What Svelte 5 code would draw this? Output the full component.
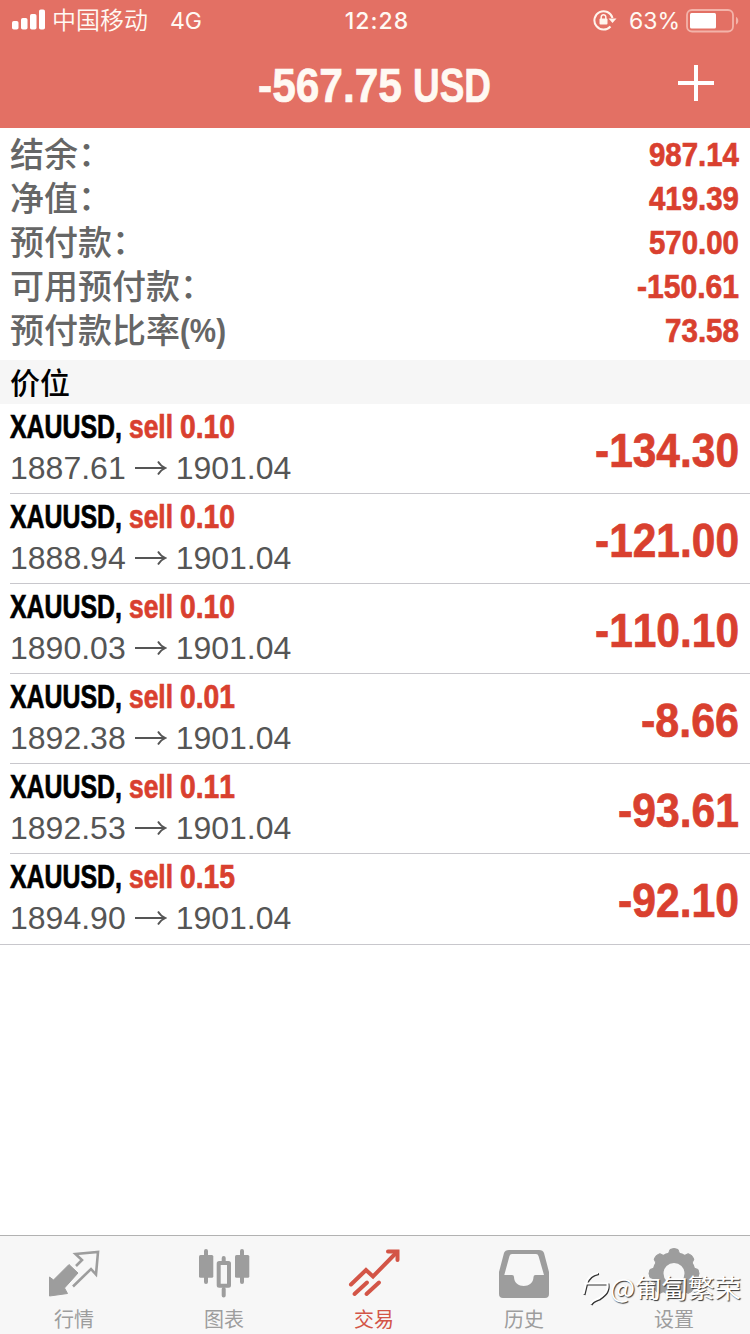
<script lang="ts">
  interface Position {
    symbol: string;
    side: string;
    volume: string;
    open: string;
    current: string;
    profit: string;
  }

  const summary = [
    { label: '结余', suffix: '：', value: '987.14' },
    { label: '净值', suffix: '：', value: '419.39' },
    { label: '预付款', suffix: '：', value: '570.00' },
    { label: '可用预付款', suffix: '：', value: '-150.61' },
    { label: '预付款比率', suffix: '(%)', value: '73.58' },
  ];

  const positions: Position[] = [
    { symbol: 'XAUUSD', side: 'sell', volume: '0.10', open: '1887.61', current: '1901.04', profit: '-134.30' },
    { symbol: 'XAUUSD', side: 'sell', volume: '0.10', open: '1888.94', current: '1901.04', profit: '-121.00' },
    { symbol: 'XAUUSD', side: 'sell', volume: '0.10', open: '1890.03', current: '1901.04', profit: '-110.10' },
    { symbol: 'XAUUSD', side: 'sell', volume: '0.01', open: '1892.38', current: '1901.04', profit: '-8.66' },
    { symbol: 'XAUUSD', side: 'sell', volume: '0.11', open: '1892.53', current: '1901.04', profit: '-93.61' },
    { symbol: 'XAUUSD', side: 'sell', volume: '0.15', open: '1894.90', current: '1901.04', profit: '-92.10' },
  ];

  const tabs = [
    { id: 'quotes', label: '行情' },
    { id: 'charts', label: '图表' },
    { id: 'trade', label: '交易' },
    { id: 'history', label: '历史' },
    { id: 'settings', label: '设置' },
  ];

  // Squeezed widths by number of characters
  const totalWidths: Record<number, number> = { 5: 74, 6: 90, 7: 102 };
  const profitWidths: Record<number, number> = { 5: 98, 6: 121, 7: 144 };

  // Advance widths of the bold face, in em; digits and "s", "e" are 0.556
  const advances: Record<string, number> = {
    '.': 0.278, ',': 0.278, '-': 0.333, '(': 0.333, ')': 0.333, '%': 0.889,
    l: 0.278, X: 0.667, S: 0.667, A: 0.722, U: 0.722, D: 0.722,
  };
  const naturalWidth = (text: string, size: number) =>
    [...text].reduce((sum, c) => sum + (advances[c] ?? 0.556), 0) * size;

  let active = $state('trade');
</script>

<!-- Condensed text: horizontally squeezed to fit the given width -->
{#snippet narrow(text: string, width: number, size: number)}
  <svg class="narrow" {width} height={size * 1.2}>
    <text transform="scale({width / naturalWidth(text, size)} 1)" x="0" y={size * 0.96} font-size={size}>{text}</text>
  </svg>
{/snippet}

<div class="screen">
  <header>
    <div class="status">
      <div class="carrier">
        <svg width="34" height="22" viewBox="0 0 34 22" fill="#fff">
          <rect x="0" y="13" width="6.5" height="8.5" rx="1.8" />
          <rect x="9" y="10" width="6.5" height="11.5" rx="1.8" />
          <rect x="18" y="6" width="6.5" height="15.5" rx="1.8" />
          <rect x="27" y="1.5" width="6" height="20" rx="1.8" />
        </svg>
        <span class="operator">中国移动</span>
        <span class="network">4G</span>
      </div>
      <span class="clock">12:28</span>
      <div class="power">
        <svg width="24" height="22" viewBox="0 0 24 22" fill="none" stroke="#fff4ec">
          <path d="M17.5 17.5A9.2 9.2 0 1 1 19.5 9" stroke-width="2" />
          <path d="M15.500 9.500h8l-4 4.500z" fill="#fff4ec" stroke="none" />
          <rect x="6.5" y="9.5" width="8" height="6" rx="1" fill="#fff4ec" stroke="none" />
          <path d="M8.200 10V8a2.300 2.300 0 0 1 4.600 0v2" stroke-width="1.5" />
        </svg>
        <span class="percent">63%</span>
        <svg width="54" height="24" viewBox="0 0 54 24">
          <rect x="1" y="1" width="46" height="21.5" rx="5" fill="none" stroke="#f3b3a9" stroke-width="1.8" />
          <rect x="4" y="4" width="26" height="15.5" rx="1.5" fill="#fff" />
          <path d="M50 8c3 1 3 6.500 0 7.500z" fill="#f3b3a9" />
        </svg>
      </div>
    </div>
    <div class="title">
      <h1>
        {@render narrow('-567.75', 144, 48)}
        {@render narrow('USD', 78, 48)}
      </h1>
      <button class="add" aria-label="+">
        <svg width="36" height="36" viewBox="0 0 36 36" stroke="#fff" stroke-width="4">
          <path d="M18 0v36M0 18h36" />
        </svg>
      </button>
    </div>
  </header>

  <section class="summary">
    {#each summary as row}
      <div class="summary-row">
        <span class="label">
          {row.label}
          {#if row.suffix === '：'}
            <span class="colon">：</span>
          {:else}
            <span class="unit">{@render narrow(row.suffix, 46, 34)}</span>
          {/if}
        </span>
        <span class="total">{@render narrow(row.value, totalWidths[row.value.length], 34)}</span>
      </div>
    {/each}
  </section>

  <h2>价位</h2>

  <ul class="positions">
    {#each positions as p}
      <li>
        <div class="deal">
          <div class="name">
            {@render narrow(p.symbol + ',', 112, 32.5)}
            <span class="side">
              {@render narrow(p.side, 44, 32.5)}
              {@render narrow(p.volume, 55, 32.5)}
            </span>
          </div>
          <div class="prices">
            <span>{p.open}</span>
            <svg width="32" height="18" viewBox="0 0 32 18" fill="none" stroke="#555" stroke-width="1.8">
              <path d="M0 9H30M23 2.500q2.500 4.500 7.500 6.500q-5 2-7.500 6.500" />
            </svg>
            <span>{p.current}</span>
          </div>
        </div>
        <span class="profit">
          {@render narrow(p.profit, profitWidths[p.profit.length], 47.5)}
        </span>
      </li>
    {/each}
  </ul>

  <nav>
    {#each tabs as tab}
      <button class="tab" class:active={active === tab.id} onclick={() => (active = tab.id)}>
        <svg width="52" height="52" viewBox="0 0 52 52">
          {#if tab.id === 'quotes'}
            <path
              d="M21 16.500l9 8.500-13.500 15 3 5.500-18 2.500V29l4 3z"
              fill="currentColor"
              stroke="currentColor"
              stroke-linejoin="round"
            />
            <path
              d="M28 18l6-6-6.500-6L50 4l-2 22.500-5-5.500-18 17.500"
              fill="none"
              stroke="currentColor"
              stroke-width="2.6"
            />
          {:else if tab.id === 'charts'}
            <g stroke="currentColor" stroke-width="4" stroke-linecap="round">
              <path d="M8 3v31M44 3v31M25.700 10v5M25.700 41v6.500" />
            </g>
            <rect x="1" y="7" width="14.3" height="22.7" rx="1.5" fill="currentColor" />
            <rect x="37" y="7" width="14.3" height="22.7" rx="1.5" fill="currentColor" />
            <rect x="20.7" y="15" width="10.3" height="22.7" rx="0.5" fill="none" stroke="currentColor" stroke-width="4" />
          {:else if tab.id === 'trade'}
            <g fill="none" stroke="currentColor" stroke-width="4" stroke-linecap="round">
              <path d="M3 36.500L18 22l7 6.500L48 5" />
              <path d="M40 3.500h9.500V12" />
              <path d="M6.500 46L19 34.500M18.500 46l12.500-11.500" />
            </g>
          {:else if tab.id === 'history'}
            <path
              fill="currentColor"
              fill-rule="evenodd"
              d="M11 2h30q4 0 5 3l5 19v22q0 4-4 4H5q-4 0-4-4V24L6 5q1-3 5-3zM14 6q-2 0-2.500 2L6.300 27H14q2 0 2 2c0 12 19.500 12 19.500 0q0-2 2-2h8.500L40.500 8q-.5-2-2.500-2z"
            />
          {:else}
            <g fill="none" stroke="currentColor">
              <circle cx="26" cy="25.5" r="16" stroke-width="11" />
              {#each [0, 45, 90, 135, 180, 225, 270, 315] as angle}
                <path d="M19 10L22 1.500q4-2 8 0L33 10z" fill="currentColor" stroke-linejoin="round" transform="rotate({angle} 26 25.5)" />
              {/each}
            </g>
          {/if}
        </svg>
        <span>{tab.label}</span>
      </button>
    {/each}
  </nav>

  <div class="watermark">
    <svg width="28" height="38" viewBox="0 0 28 38" fill="none" stroke="#fff" stroke-width="2">
      <path d="M1.500 26L4 15.500C6 9 10 6 16 5M2 15.500h23.500c1 7-2 10-8 14.500c-3 1.500-7 2-9 6" />
    </svg>
    <span>@匍匐繁荣</span>
  </div>
</div>

<style>
  :global(body) {
    background: #fff;
  }
  .screen {
    position: relative;
    display: flex;
    flex-direction: column;
    width: 750px;
    height: 1334px;
    overflow: hidden;
    font-family: 'Liberation Sans', 'Noto Sans CJK SC', sans-serif;
  }
  button {
    padding: 0;
    border: none;
    background: none;
    font: inherit;
  }
  .narrow {
    display: block;
    overflow: visible;
    fill: currentColor;
    stroke: currentColor;
    stroke-width: 0.7px;
    font-family: 'Liberation Sans', sans-serif;
    font-weight: bold;
    font-kerning: none;
  }

  header {
    height: 128px;
    flex: none;
    background: #e37064;
    color: #fff9f3;
  }
  .status {
    display: grid;
    grid-template-columns: 1fr auto 1fr;
    align-items: center;
    height: 40px;
    padding: 0 10px 0 12px;
    font-family: Inter, 'Noto Sans CJK SC', sans-serif;
    font-size: 24px;
    line-height: 40px;
  }
  .carrier,
  .power {
    display: flex;
    align-items: center;
  }
  .carrier svg {
    margin-top: -3px;
  }
  .operator {
    margin: -3px 0 0 6px;
    font-family: 'Noto Sans CJK SC', sans-serif;
    font-weight: 350;
  }
  .network {
    margin: 1px 0 0 22px;
    font-size: 23px;
  }
  .clock {
    margin-top: 1px;
    padding-left: 2px;
    font-weight: 500;
    font-size: 23px;
    letter-spacing: 1px;
  }
  .power {
    justify-content: flex-end;
  }
  .power svg:first-child {
    margin: -2px -3px 0 0;
  }
  .percent {
    margin: 1px 6px 0 15px;
    font-size: 23px;
  }
  .title {
    display: flex;
    justify-content: center;
    position: relative;
    height: 88px;
  }
  h1 {
    display: flex;
    gap: 11px;
    margin: 16px 2px 0 0;
  }
  .add {
    position: absolute;
    top: 25px;
    right: 36px;
    height: 36px;
  }

  .summary {
    flex: none;
    height: 228px;
    padding: 4px 11px 0 10px;
  }
  .summary-row {
    display: flex;
    justify-content: space-between;
    align-items: center;
    height: 44px;
  }
  .total {
    margin-top: -2px;
    color: #d9402f;
  }
  .label {
    display: flex;
    align-items: center;
    margin-top: -3px;
    color: #666;
    font-family: 'Noto Sans CJK SC', sans-serif;
    font-size: 34px;
    font-weight: 500;
    line-height: 44px;
  }
  .colon {
    margin-top: -1px;
  }
  .unit {
    margin-top: 2px;
  }
  .unit .narrow {
    stroke: none;
  }

  h2 {
    flex: none;
    height: 44px;
    margin: 0;
    padding-left: 10px;
    background: #f6f6f6;
    font-family: 'Noto Sans CJK SC', sans-serif;
    font-size: 30px;
    font-weight: 500;
    line-height: 42px;
  }

  .positions {
    flex: 1;
    margin: 0;
    padding: 0;
    list-style: none;
  }
  li {
    display: flex;
    justify-content: space-between;
    height: 90px;
    margin-left: 10px;
    padding-right: 11px;
    box-sizing: border-box;
    border-bottom: 1px solid #c8c7cc;
  }
  li:last-child {
    height: 91px;
    margin-left: 0;
    padding-left: 10px;
  }
  .name {
    display: flex;
    gap: 7px;
    margin-top: 3px;
    color: #000;
  }
  .side {
    display: flex;
    gap: 7px;
    color: #d9402f;
  }
  .prices {
    display: flex;
    align-items: center;
    gap: 9px;
    margin-top: 3px;
    color: #555;
    font-size: 32px;
    line-height: 38px;
  }
  .profit {
    margin-top: 17px;
    color: #d9402f;
  }

  nav {
    display: flex;
    flex: none;
    height: 98px;
    border-top: 1px solid #b2b2b2;
    background: #f7f7f7;
  }
  .tab {
    display: flex;
    flex: 1;
    flex-direction: column;
    align-items: center;
    padding: 12px 2px 0 0;
    color: #9d9d9d;
    font-family: 'Noto Sans CJK SC', sans-serif;
    font-size: 20px;
    line-height: 28px;
  }
  .tab.active {
    color: #d35547;
  }
  .tab span {
    margin-top: 5px;
  }

  .watermark {
    position: absolute;
    left: 582px;
    top: 1268px;
    display: flex;
    align-items: center;
    color: #fff;
    font-family: 'Noto Sans CJK SC', sans-serif;
    font-size: 26.5px;
    line-height: 34px;
    text-shadow: 1px 1px 1px #333;
  }
  .watermark svg {
    filter: drop-shadow(1px 1px 0.5px #333);
  }
</style>
